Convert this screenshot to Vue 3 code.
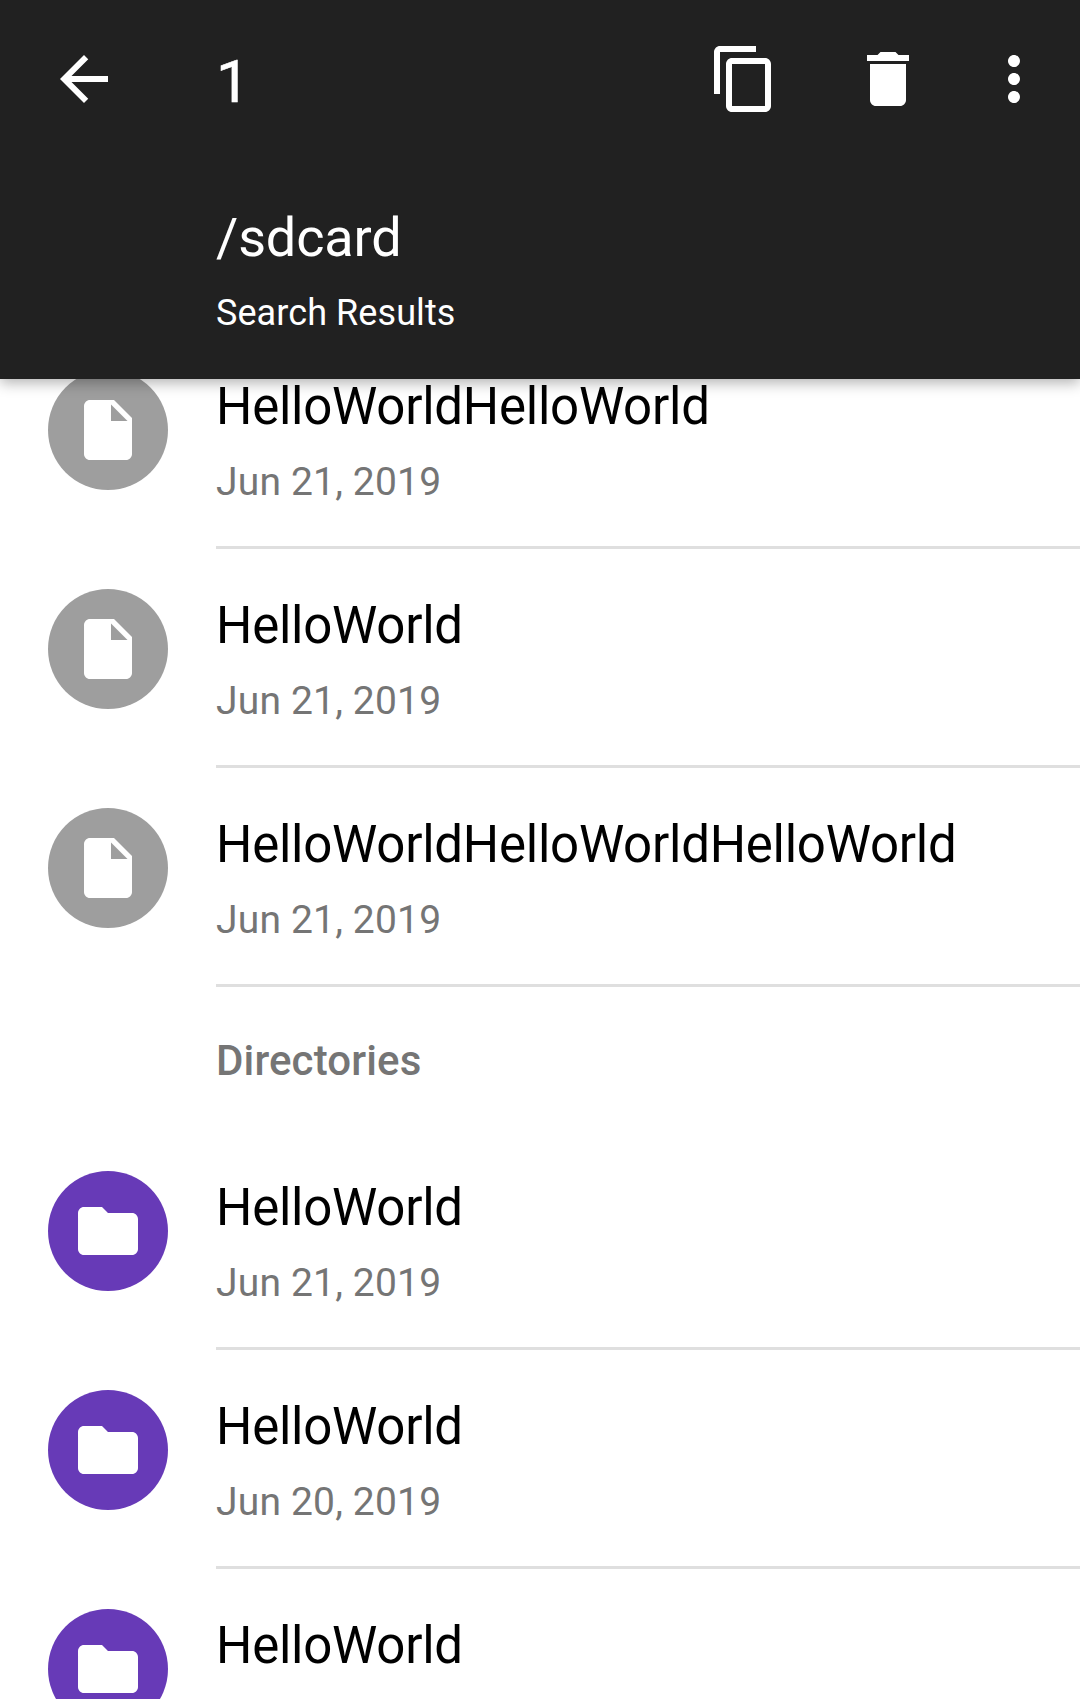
<script setup>
const sections = [
  {
    title: '',
    kind: 'file',
    items: [
      { name: 'HelloWorldHelloWorld', date: 'Jun 21, 2019' },
      { name: 'HelloWorld', date: 'Jun 21, 2019' },
      { name: 'HelloWorldHelloWorldHelloWorld', date: 'Jun 21, 2019' },
    ],
  },
  {
    title: 'Directories',
    kind: 'folder',
    items: [
      { name: 'HelloWorld', date: 'Jun 21, 2019' },
      { name: 'HelloWorld', date: 'Jun 20, 2019' },
      { name: 'HelloWorld', date: '' },
    ],
  },
]

const icons = {
  file: 'M6 2c-1.1 0-1.99.9-1.99 2L4 20c0 1.1.89 2 1.99 2H18c1.1 0 2-.9 2-2V8l-6-6H6zm7 7V3.5L18.5 9H13z',
  folder: 'M10 4H4c-1.1 0-1.99.9-1.99 2L2 18c0 1.1.9 2 2 2h16c1.1 0 2-.9 2-2V8c0-1.1-.9-2-2-2h-8l-2-2z',
}
</script>

<template>
  <div class="screen">
    <header class="header">
      <div class="toolbar">
        <svg class="icon" viewBox="0 0 24 24"><path d="M20 11H7.83l5.59-5.59L12 4l-8 8 8 8 1.41-1.41L7.83 13H20v-2z" /></svg>
        <span class="count">1</span>
        <div class="actions">
          <svg class="icon" viewBox="0 0 24 24"><path d="M16 1H4c-1.1 0-2 .9-2 2v14h2V3h12V1zm3 4H8c-1.1 0-2 .9-2 2v14c0 1.1.9 2 2 2h11c1.1 0 2-.9 2-2V7c0-1.1-.9-2-2-2zm0 16H8V7h11v14z" /></svg>
          <svg class="icon" viewBox="0 0 24 24"><path d="M6 19c0 1.1.9 2 2 2h8c1.1 0 2-.9 2-2V7H6v12zM19 4h-3.5l-1-1h-5l-1 1H5v2h14V4z" /></svg>
          <svg class="icon more" viewBox="0 0 24 24"><path d="M12 8c1.1 0 2-.9 2-2s-.9-2-2-2-2 .9-2 2 .9 2 2 2zm0 2c-1.1 0-2 .9-2 2s.9 2 2 2 2-.9 2-2-.9-2-2-2zm0 6c-1.1 0-2 .9-2 2s.9 2 2 2 2-.9 2-2-.9-2-2-2z" /></svg>
        </div>
      </div>
      <div class="path">/sdcard</div>
      <div class="subtitle">Search Results</div>
    </header>
    <main class="list">
      <section v-for="section in sections" :key="section.kind">
        <h2 v-if="section.title" class="section-title">{{ section.title }}</h2>
        <article v-for="(item, i) in section.items" :key="i" class="row">
          <div class="avatar" :class="section.kind">
            <svg class="icon" viewBox="0 0 24 24"><path :d="icons[section.kind]" /></svg>
          </div>
          <div class="details">
            <div class="name">{{ item.name }}</div>
            <div class="date">{{ item.date }}</div>
          </div>
        </article>
      </section>
    </main>
  </div>
</template>

<style>
body {
  margin: 0;
}
</style>

<style scoped>
.screen {
  display: flex;
  flex-direction: column;
  width: 1080px;
  height: 1699px;
  overflow: hidden;
  background: #fff;
  font-family: Roboto, sans-serif;
}
.icon {
  display: block;
  width: 72px;
  height: 72px;
  fill: #fff;
}
.header {
  position: relative;
  z-index: 1;
  box-sizing: border-box;
  flex: none;
  height: 379px;
  background: #212121;
  color: #fff;
  box-shadow: 0 4px 13px rgba(0, 0, 0, 0.3);
}
.toolbar {
  display: flex;
  align-items: center;
  height: 158px;
  padding: 0 30px 0 48px;
}
.count {
  margin-left: 96px;
  padding-top: 5px;
  font-size: 60px;
  line-height: 70px;
  -webkit-text-stroke: 0.5px #fff;
}
.actions {
  display: flex;
  gap: 72px;
  margin-left: auto;
}
.more {
  margin-left: -18px;
}
.path {
  margin: 48px 0 0 216px;
  font-size: 54px;
  line-height: 64px;
  letter-spacing: -0.15px;
}
.subtitle {
  margin: 22px 0 0 216px;
  font-size: 36px;
  line-height: 42px;
  letter-spacing: 0.08px;
}
.list {
  flex: none;
  margin-top: -49px;
}
.section-title {
  margin: 0;
  padding: 3px 0 0 216px;
  font-size: 42px;
  font-weight: 500;
  line-height: 141px;
  letter-spacing: 0.13px;
  color: #757575;
}
.row {
  display: flex;
  height: 219px;
}
.avatar {
  display: flex;
  align-items: center;
  justify-content: center;
  flex: none;
  width: 120px;
  height: 120px;
  margin: 40px 48px 0;
  border-radius: 50%;
}
.file {
  background: #9e9e9e;
}
.folder {
  background: #673ab7;
}
.details {
  box-sizing: border-box;
  flex: 1;
  padding-top: 47px;
  border-bottom: 3px solid #dfdfdf;
}
.name {
  font-size: 51px;
  line-height: 60px;
  letter-spacing: -0.25px;
  color: #000;
}
.date {
  margin-top: 22px;
  font-size: 39px;
  line-height: 46px;
  letter-spacing: 0.18px;
  color: #757575;
}
</style>
